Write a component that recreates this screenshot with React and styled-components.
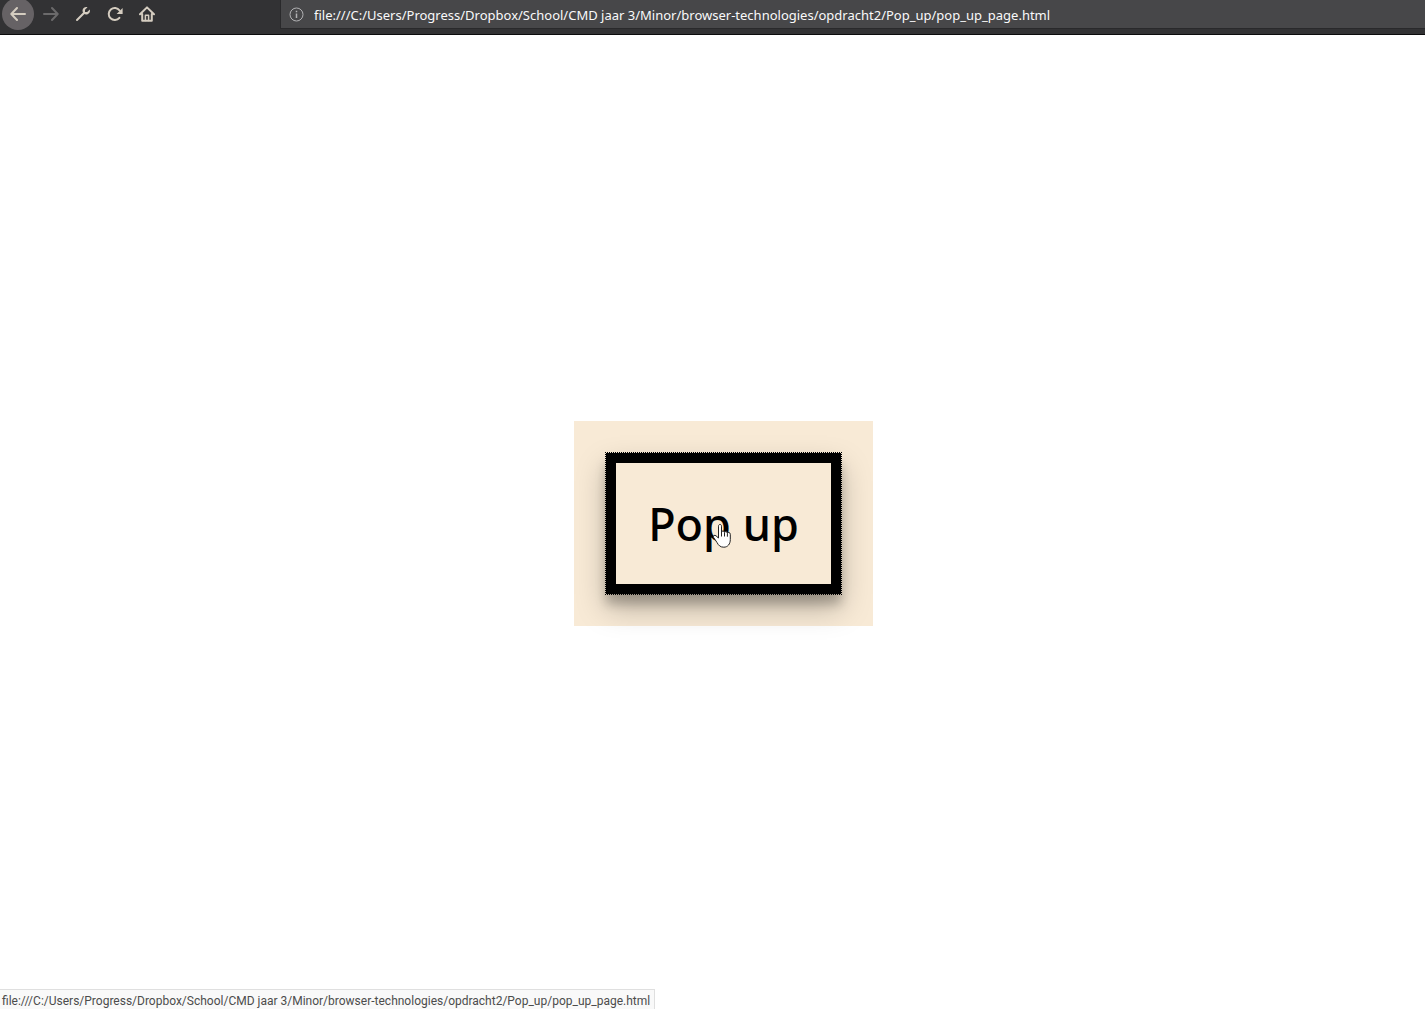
import React from "react";
import styled, { createGlobalStyle } from "styled-components";

const ADDRESS =
  "file:///C:/Users/Progress/Dropbox/School/CMD jaar 3/Minor/browser-technologies/opdracht2/Pop_up/pop_up_page.html";

const GlobalStyle = createGlobalStyle`
  *, *::before, *::after { box-sizing: border-box; }
  body {
    margin: 0;
    background: #fff;
    font-family: "Noto Sans", "Open Sans", sans-serif;
  }
`;

const Browser = styled.div`
  display: flex;
  flex-direction: column;
  min-height: 100vh;
`;

const Toolbar = styled.header`
  display: flex;
  align-items: flex-start;
  height: 35px;
  background: #323234;
  border-bottom: 1px solid #0c0c0d;
`;

const NavButtons = styled.nav`
  display: flex;
  flex: none;
  width: 280px;
  padding-left: 2px;
`;

const NavButton = styled.button`
  display: flex;
  align-items: center;
  justify-content: center;
  width: 32px;
  height: 28px;
  padding: 0;
  border: 0;
  background: none;
  color: #d5cdc0;

  &:disabled { color: #6b6a6b; }
`;

const BackButton = styled(NavButton)`
  height: 32px;
  margin: -2px 1px 0 0;
  border-radius: 50%;
  background: #666265;
`;

const AddressBar = styled.label`
  display: flex;
  flex: 1;
  align-items: center;
  gap: 10px;
  height: 29px;
  padding-left: 8px;
  background: #474749;
  border: solid #29292b;
  border-width: 0 0 1px 1px;
  color: #b1b1b3;
`;

const AddressInput = styled.input`
  flex: 1;
  min-width: 0;
  height: 28px;
  padding: 2px 0 0;
  border: 0;
  outline: 0;
  background: none;
  color: #f9f9fa;
  font: 13px "Noto Sans", "Open Sans", sans-serif;
`;

const Page = styled.main`
  display: flex;
  flex: 1;
  align-items: center;
  justify-content: center;
  padding: 3px 0 0 22px;
`;

const Panel = styled.section`
  padding: 32px;
  background: #f8ead6;
`;

const PopUpLink = styled.a`
  position: relative;
  display: block;
  padding: 32px;
  border: 10px solid #000;
  outline: 1px dotted #000;
  box-shadow: 0 14px 28px rgba(0, 0, 0, 0.25), 0 10px 10px rgba(0, 0, 0, 0.22);
  color: #000;
  font-size: 45px;
  font-weight: 500;
  line-height: 57px;
  text-align: center;
  text-decoration: none;
  cursor: pointer;
`;

const Pointer = styled.svg`
  position: absolute;
  top: 60px;
  left: 96px;
`;

const StatusBar = styled.footer`
  position: fixed;
  bottom: 0;
  left: 0;
  height: 20px;
  padding: 1px 4px 0 2px;
  background: #f9f9f9;
  border: solid #dfdfdf;
  border-width: 1px 1px 0 0;
  color: #4c4c4c;
  font-family: Roboto, "Noto Sans", sans-serif;
  font-size: 12px;
  line-height: 20px;
  white-space: nowrap;
`;

function Icon({ children }) {
  return (
    <svg
      width="16"
      height="16"
      viewBox="0 0 16 16"
      fill="none"
      stroke="currentColor"
      strokeWidth="2"
      strokeLinecap="round"
      strokeLinejoin="round"
      aria-hidden="true"
    >
      {children}
    </svg>
  );
}

export default function App() {
  return (
    <Browser>
      <GlobalStyle />
      <Toolbar>
        <NavButtons aria-label="Browser">
          <BackButton type="button" aria-label="Back">
            <Icon><path d="M15 8H1.500M7 2 1.300 8 7 14" /></Icon>
          </BackButton>
          <NavButton type="button" aria-label="Forward" disabled>
            <Icon><path d="M1 8h13.500M9 2l5.700 6L9 14" /></Icon>
          </NavButton>
          <NavButton type="button" aria-label="Developer tools">
            <Icon>
              <path d="m2 14 7-7" />
              <path
                d="M12.500 1.200 10 3.800V6h2.200l2.600-2.500c.8 2.500-1 5-3.500 5-2 0-3.800-1.600-3.800-3.700 0-2.500 2.500-4.300 5-3.600Z"
                fill="currentColor"
                stroke="none"
              />
            </Icon>
          </NavButton>
          <NavButton type="button" aria-label="Reload">
            <Icon>
              <path d="M12.400 11.800A6 6 0 1 1 12.600 4.500" />
              <path d="M15.600 2v6H9.600Z" fill="currentColor" stroke="none" />
            </Icon>
          </NavButton>
          <NavButton type="button" aria-label="Home">
            <Icon>
              <path d="M1 8.300 8 1.400l7 6.900M3.200 8v6.800h9.600V8" />
              <path d="M6.400 14.500V9.300h3.200v5.200" strokeWidth="1.500" />
            </Icon>
          </NavButton>
        </NavButtons>
        <AddressBar>
          <svg width="15" height="15" viewBox="0 0 15 15" fill="none" stroke="currentColor" aria-hidden="true">
            <circle cx="7.500" cy="7.500" r="6.500" />
            <path d="M7.500 6.500V11M7.500 3.700v1.600" strokeWidth="1.500" />
          </svg>
          <AddressInput type="text" aria-label="Address" defaultValue={ADDRESS} spellCheck={false} />
        </AddressBar>
      </Toolbar>
      <Page>
        <Panel>
          <PopUpLink href="#popup">
            Pop up
            <Pointer width="20" height="26" viewBox="0 0 20 26" aria-hidden="true">
              <path
                d="M6.500 15V3.200C6.500.8 9.500.8 9.500 3.200V9c.3-1.500 2.700-1.400 3 .4.500-1.300 2.600-1 2.900.7.700-1.200 2.900-.8 2.900 1.200v5.200c0 4.500-2.500 7.700-6.500 7.700-3.500 0-5.200-1.700-6.800-4.700L1.600 14.400c-.8-1.600 1-2.800 2.400-1.600Z"
                fill="#fff"
                stroke="#222"
                strokeLinejoin="round"
              />
              <path d="M9.500 9v4.500M12.500 9.500v4M15.400 10.200v3.500" stroke="#222" />
            </Pointer>
          </PopUpLink>
        </Panel>
      </Page>
      <StatusBar>{ADDRESS}</StatusBar>
    </Browser>
  );
}
